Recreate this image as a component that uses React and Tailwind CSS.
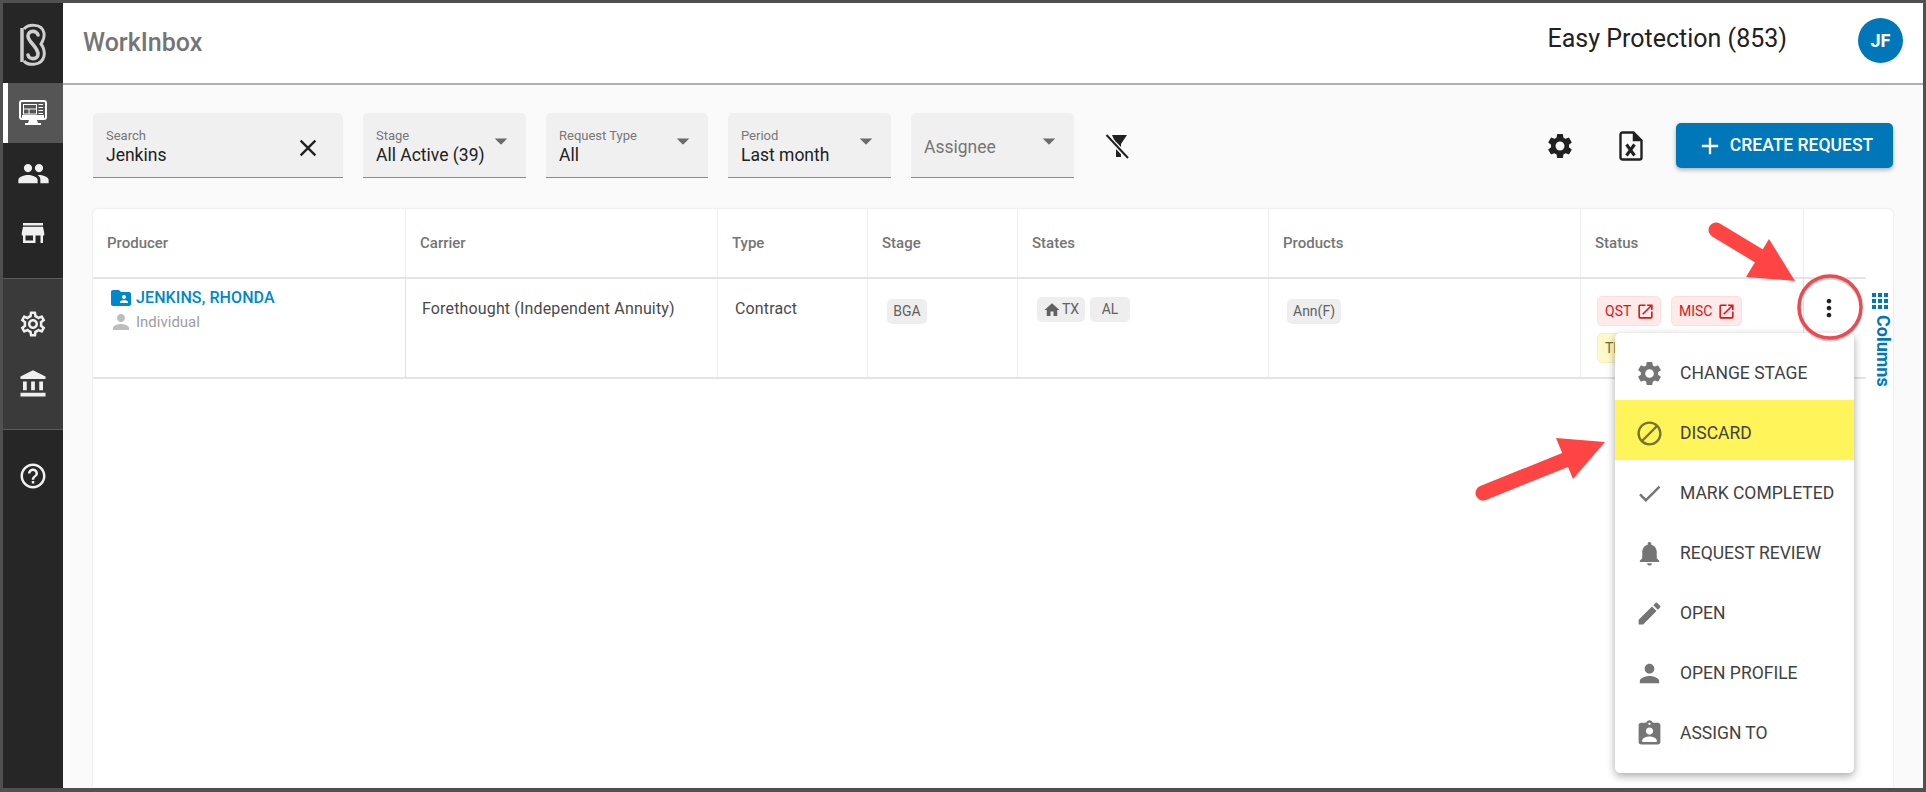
import {
  MdPeople,
  MdStore,
  MdOutlineSettings,
  MdAccountBalance,
  MdHelpOutline,
  MdClose,
  MdArrowDropDown,
  MdSettings,
  MdAdd,
  MdFolderShared,
  MdPerson,
  MdHome,
  MdOpenInNew,
  MdMoreVert,
  MdApps,
  MdBlock,
  MdCheck,
  MdNotifications,
  MdEdit,
  MdAssignmentInd,
} from 'react-icons/md';

const font = { fontFamily: 'Roboto, sans-serif' };

function Logo() {
  return (
    <svg width="28" height="44" viewBox="0 0 28 44" fill="none" stroke="#cfcfcf">
      <path d="M5 6C9 1 23 0 25 10c.6 3-.5 7-3 11 3 4 3.800 8 3 12-2 10-16 10-20 5" strokeWidth="3" />
      <path d="M3 5v34" strokeWidth="3.500" />
      <path d="M19 12c-1-5-10-5-10 1 0 6 10 11 10 18 0 6-9 6-10 1" strokeWidth="3.600" strokeLinecap="round" />
    </svg>
  );
}

function MonitorIcon() {
  return (
    <svg width="28" height="26" viewBox="0 0 28 26" fill="none">
      <rect x="1" y="1" width="26" height="18" rx="2" fill="#555555" stroke="#fff" strokeWidth="2" />
      <path d="M3 15h22v4H3z" fill="#fff" />
      <rect x="4.500" y="4.500" width="13" height="9.500" stroke="#fff" />
      <path d="M4.500 9h13M10 9v5M19.500 4.500h4.500M19.500 7.500h4.500M19.500 10.500h4.500M19.500 13.500h4.500" stroke="#fff" />
      <path d="M10 20h8l1 3h3v2H6v-2h3z" fill="#fff" />
    </svg>
  );
}

function SideItem({ children, active }) {
  return (
    <div className={active ? 'h-[60px] flex items-center justify-center bg-[#555555] shadow-[inset_5px_0_0_#ffffff]' : 'h-[60px] flex items-center justify-center'}>
      {children}
    </div>
  );
}

function Sidebar() {
  return (
    <div className="w-[60px] shrink-0 flex flex-col bg-[#262626] text-[#f0f0f0]">
      <div className="h-[80px] flex items-center justify-center pt-[3px]">
        <Logo />
      </div>
      <SideItem active><MonitorIcon /></SideItem>
      <SideItem><MdPeople size={33} /></SideItem>
      <SideItem><MdStore size={30} /></SideItem>
      <div className="h-[15px]" />
      <div className="h-[152px] pt-[15px] bg-[#3a3a3a] border-y border-[#5c5c5c]">
        <SideItem><MdOutlineSettings size={30} /></SideItem>
        <SideItem><MdAccountBalance size={30} /></SideItem>
      </div>
      <div className="mt-[16px]">
        <SideItem><MdHelpOutline size={30} /></SideItem>
      </div>
    </div>
  );
}

function Field({ label, value, placeholder, width = 'w-[163px]', icon }) {
  return (
    <div className={`${width} h-[65px] relative bg-[#f0f0f0] rounded-t-[5px] border-b border-[#8a8a8a] pl-[13px] pr-[10px] pt-[4px] flex items-center justify-between`}>
      {placeholder ? (
        <span className="text-[17.500px] text-[#757575]">{placeholder}</span>
      ) : (
        <div className="flex flex-col">
          <span className="text-[13px] leading-[16px] text-[#777777]">{label}</span>
          <span className="text-[17.500px] leading-[22px] text-[#212121] whitespace-nowrap">{value}</span>
        </div>
      )}
      {icon}
    </div>
  );
}

const caret = <MdArrowDropDown size={30} className="text-[#6b6b6b] shrink-0 absolute right-[10px] top-[13px]" />;

function FilterOff() {
  return (
    <svg width="26" height="26" viewBox="0 0 26 26" className="shrink-0">
      <path d="M8 2h15l-6 9v13h-5V11z" fill="#212121" />
      <path d="M2 2l22 23" stroke="#fafafa" strokeWidth="5" />
      <path d="M2.500 2l21.500 23" stroke="#212121" strokeWidth="2" />
    </svg>
  );
}

function ExcelIcon() {
  return (
    <svg width="24" height="30" viewBox="0 0 24 30" fill="none" className="shrink-0">
      <path d="M3.500 1.500h11l8 8v17a2 2 0 0 1-2 2h-17a2 2 0 0 1-2-2v-23a2 2 0 0 1 2-2z" stroke="#212121" strokeWidth="2.400" />
      <path d="M14.500 1.500v8h8" fill="#212121" stroke="#212121" strokeWidth="1.500" />
      <path d="M7.500 13.500l8 11M15.500 13.500l-8 11" stroke="#212121" strokeWidth="3" />
    </svg>
  );
}

function Toolbar() {
  return (
    <div className="flex items-center gap-[20px] pt-[28px]">
      <Field
        label="Search"
        value="Jenkins"
        width="w-[250px]"
        icon={<MdClose size={28} className="text-[#212121] absolute right-[21px] top-[21px]" />}
      />
      <Field label="Stage" value="All Active (39)" icon={caret} />
      <Field label="Request Type" value="All" width="w-[162px]" icon={caret} />
      <Field label="Period" value="Last month" icon={caret} />
      <Field placeholder="Assignee" icon={caret} />
      <div className="ml-[10px]">
        <FilterOff />
      </div>
      <div className="ml-auto flex items-center">
        <MdSettings size={30} className="text-[#212121]" />
        <div className="ml-[44px]">
          <ExcelIcon />
        </div>
        <button className="ml-[33px] w-[217px] h-[45px] rounded-[5px] bg-[#0077b8] text-white flex items-center justify-center gap-[6px] shadow-[0_2px_4px_rgba(0,0,0,0.3)]">
          <MdAdd size={28} />
          <span className="text-[17.500px] font-medium">CREATE REQUEST</span>
        </button>
      </div>
    </div>
  );
}

const gridCols = 'grid grid-cols-[313px_312px_150px_150px_251px_312px_223px_62px]';

function HeadCell({ children, last }) {
  return (
    <div className={last ? 'flex items-center pl-[15px] text-[15px] font-medium text-[#757575]' : 'flex items-center pl-[14px] text-[15px] font-medium text-[#757575] border-r border-[#eeeeee]'}>
      {children}
    </div>
  );
}

function Chip({ children, className = '' }) {
  return (
    <span className={`h-[25px] rounded-[5px] bg-[#eeeeee] text-[#616161] text-[14px] flex items-center justify-center ${className}`}>
      {children}
    </span>
  );
}

function StatusChip({ label, width }) {
  return (
    <span className={`${width} h-[30px] rounded-[5px] bg-[#ffeaea] border border-[#fbdfdf] text-[#d8141c] text-[14px] pl-[7px] flex items-center gap-[5px]`}>
      {label}
      <MdOpenInNew size={19} />
    </span>
  );
}

function Table() {
  return (
    <div className="mt-[31px] flex-1 flex bg-white rounded-t-[5px] shadow-[0_0_2px_rgba(0,0,0,0.15)]">
      <div className="w-[1773px]">
        <div className={`${gridCols} h-[70px] border-b-2 border-[#e4e4e4]`}>
          <HeadCell>Producer</HeadCell>
          <HeadCell>Carrier</HeadCell>
          <HeadCell>Type</HeadCell>
          <HeadCell>Stage</HeadCell>
          <HeadCell>States</HeadCell>
          <HeadCell>Products</HeadCell>
          <HeadCell>Status</HeadCell>
          <HeadCell last />
        </div>
        <div className={`${gridCols} h-[100px] border-b-2 border-[#e4e4e4] text-[16px] text-[#4a4a4a]`}>
          <div className="border-r border-[#e0e0e0] pl-[16px] pt-[7px]">
            <div className="flex items-center gap-[3px] h-[24px]">
              <MdFolderShared size={24} className="text-[#0088cc]" />
              <span className="font-medium text-[#0088cc] tracking-[0.1px]">JENKINS, RHONDA</span>
            </div>
            <div className="flex items-center gap-[3px] h-[24px] text-[#9e9e9e] text-[15px]">
              <MdPerson size={24} className="text-[#bdbdbd]" />
              Individual
            </div>
          </div>
          <div className="border-r border-[#eeeeee] pl-[16px] pt-[18px] tracking-[0.15px]">Forethought (Independent Annuity)</div>
          <div className="border-r border-[#eeeeee] pl-[17px] pt-[18px] tracking-[0.15px]">Contract</div>
          <div className="border-r border-[#eeeeee] pl-[19px] pt-[20px]">
            <Chip className="w-[40px]">BGA</Chip>
          </div>
          <div className="border-r border-[#eeeeee] pl-[19px] pt-[18px] flex items-start gap-[5px]">
            <Chip className="w-[48px] gap-[1px]"><MdHome size={18} />TX</Chip>
            <Chip className="w-[40px]">AL</Chip>
          </div>
          <div className="border-r border-[#eeeeee] pl-[18px] pt-[20px]">
            <Chip className="w-[54px]">Ann(F)</Chip>
          </div>
          <div className="border-r border-[#e0e0e0] pl-[16px] pt-[17px]">
            <div className="flex gap-[10px]">
              <StatusChip label="QST" width="w-[64px]" />
              <StatusChip label="MISC" width="w-[71px]" />
            </div>
            <span className="mt-[7px] w-[95px] h-[30px] rounded-[5px] bg-[#fff9cc] border border-[#f5efbe] text-[#7a6a2a] text-[14px] pl-[7px] flex items-center">TI</span>
          </div>
          <div className="pl-[11px] pt-[15px]">
            <MdMoreVert size={28} className="text-[#212121]" />
          </div>
        </div>
      </div>
      <div className="w-[27px] pt-[80px] pl-[5px] flex flex-col text-[#0077b8]">
        <MdApps size={24} className="-ml-[3px]" />
        <span className="mt-[2px] -ml-[3px] text-[18px] font-bold [writing-mode:vertical-rl] leading-[20px]">Columns</span>
      </div>
    </div>
  );
}

const menuItems = [
  ['CHANGE STAGE', MdSettings],
  ['DISCARD', MdBlock],
  ['MARK COMPLETED', MdCheck],
  ['REQUEST REVIEW', MdNotifications],
  ['OPEN', MdEdit],
  ['OPEN PROFILE', MdPerson],
  ['ASSIGN TO', MdAssignmentInd],
];

function RowMenu() {
  return (
    <div className="absolute left-[1615px] top-[333px] w-[239px] h-[440px] pt-[7px] bg-white rounded-[5px] shadow-[0_3px_8px_rgba(0,0,0,0.35)]">
      {menuItems.map(([label, Icon]) => (
        <div
          key={label}
          className={label === 'DISCARD' ? 'h-[60px] pt-[6px] flex items-center pl-[20px] gap-[16px] bg-[#fff459] text-[17.500px] text-[#424242]' : 'h-[60px] pt-[6px] flex items-center pl-[20px] gap-[16px] text-[17.500px] text-[#424242]'}
        >
          <Icon size={29} className={label === 'DISCARD' ? 'text-[#78732c]' : 'text-[#757575]'} />
          {label}
        </div>
      ))}
    </div>
  );
}

function Annotations() {
  return (
    <svg className="absolute left-0 top-0 pointer-events-none" width="1926" height="792" viewBox="0 0 1926 792" fill="none">
      <circle cx="1830" cy="307" r="31" stroke="#aaaaaa" strokeWidth="3" transform="translate(0 2)" opacity="0.6" />
      <circle cx="1830" cy="307" r="31" stroke="#ea4a50" strokeWidth="3.500" />
      <path d="M1716 230l48 29" stroke="#ff4444" strokeWidth="15" strokeLinecap="round" />
      <path d="M1795 281l-49-4 23-38z" fill="#ff4444" />
      <path d="M1483 493l82-33" stroke="#ff4444" strokeWidth="15" strokeLinecap="round" />
      <path d="M1605 442l-49-4 17 41z" fill="#ff4444" />
    </svg>
  );
}

export default function App() {
  return (
    <div style={font} className="relative w-[1926px] h-[792px] overflow-hidden bg-[#505050] pt-[3px] pl-[3px] pr-[3px] pb-[4px]">
      <div className="flex h-full">
        <Sidebar />
        <div className="flex-1 flex flex-col min-w-0">
          <header className="h-[82px] shrink-0 bg-white border-b-2 border-[#b0b0b0] flex items-center pl-[20px] pr-[20px]">
            <h1 className="text-[25px] font-medium text-[#757575]">WorkInbox</h1>
            <span className="ml-auto -mt-[9px] text-[25px] text-[#212121]">Easy Protection (853)</span>
            <div className="ml-[71px] -mt-[5px] w-[45px] h-[45px] rounded-full bg-[#0077b8] text-white font-bold text-[18px] flex items-center justify-center">JF</div>
          </header>
          <main className="flex-1 flex flex-col bg-[#fafafa] px-[30px]">
            <Toolbar />
            <Table />
          </main>
        </div>
      </div>
      <RowMenu />
      <Annotations />
    </div>
  );
}
